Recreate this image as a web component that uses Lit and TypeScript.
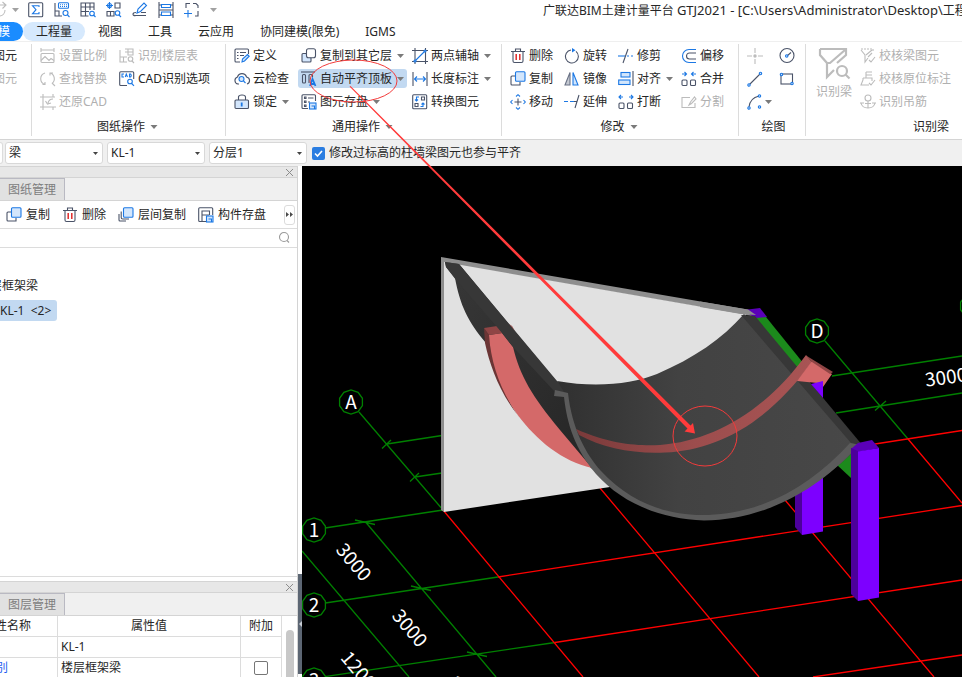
import { LitElement, html, svg, css, nothing, SVGTemplateResult } from "lit";
import { customElement, property } from "lit/decorators.js";
import { classMap } from "lit/directives/class-map.js";

const glyphs: Record<string, SVGTemplateResult> = {
  redo: svg`<path class="g" d="M14 8a6 6 0 0 1-5 6M4 7V5q0-2 3-2h8M11.500 0l3.500 3-3.500 3.500"/>`,
  sum: svg`<rect class="d" x=".7" y=".7" width="14" height="14" rx="1"/><path class="b" d="M11 5V3.700H4.500L8 7.700 4.500 11.800H11V10"/>`,
  gridTop: svg`<path class="d" d="M1 1v13h7M1 9h4v5"/><rect class="b" x="4.500" y=".700" width="10" height="5.600" rx="1"/><path class="b" stroke-dasharray="1 1" d="M6 2.700h8M6 4.500h8"/><circle class="b" cx="11.500" cy="11" r="2.500"/><path class="b" d="M13.500 13l2 2"/>`,
  table: svg`<path class="d" d="M8.500 14H1V1h13v7M1 5h13M1 9.500h8M5.500 1v13M10 1v7"/><circle class="b" cx="12" cy="11.500" r="2.300"/><path class="b" d="M13.500 13l2 2"/>`,
  blocks: svg`<path class="d" d="M9 1h5v5H9zM8 9.500H1V14h7zM4.500 9.500V14"/><circle class="b" cx="3.500" cy="3.500" r="2"/><path class="b" d="M3.500 0v7M0 3.500h7"/><circle class="b" cx="11.500" cy="11" r="2.300"/><path class="b" d="M13 13l2 2"/>`,
  pencil: svg`<path class="b" d="M5 11l1-4 6-6 2.500 2.500-6 6z"/><path class="d" d="M4 10.500q-3 0-3 1.700t3 1.300h10M9 10.500h5"/>`,
  ladder: svg`<path class="d" d="M1 0v16M15 0v16M1 3h2M13 3h2M1 8h14M1 13h2M13 13h2"/><path class="b" d="M3.500 2.500h9v3h-9zM3.500 10h9v3.500h-9z"/>`,
  expand: svg`<path class="d" d="M2 6V1.500h4M9 1.500h3l2 2V6M14 9v5h-3"/><path class="b" d="M4 8v7.500M0 11.500h8"/>`,
  scale: svg`<path class="g" d="M1 0v4M14 0v4M1 2h13"/><rect class="g" x="1" y="5.500" width="13" height="9" rx="1"/><path class="g" d="M1 12.500l4-4 4 4 2-2 3 2"/>`,
  floors: svg`<path class="g" d="M6 1h8v6H9V1M6 4h8M1 2v12h7M1 9h7M4.500 9v5"/><circle class="g" cx="11.500" cy="11" r="2.300"/><path class="g" d="M13 13l2 2"/>`,
  swap: svg`<path class="g" d="M5 13.500A6 6 0 0 1 5 2M10 2a6 6 0 0 1 2 10.500M2.500 13.500H5V11M13 2h-3v2.500M12 12l3 3"/>`,
  cad: svg`<path class="d" d="M8 14.500H1.700q-1 0-1-1V1.700q0-1 1-1h12q1 0 1 1V8"/><path class="b" d="M5 3H3v3h2M6.300 6l1-3 1.200 3M10.500 3v3h1q1.500-1.500 0-3z"/><circle class="b" cx="11" cy="10.500" r="2.300"/><path class="b" d="M12.700 12.500l2.300 2.300"/>`,
  restore: svg`<path class="g" d="M3 0v16M13 0v3M0 3h15M0 13h16M13 13v3M13 5q-4 0-5 4M5.500 7l2 3L11 9"/>`,
  define: svg`<path class="d" d="M14.500 6V2q0-1-1-1H2Q1 1 1 2v11q0 1 1 1h4M3 4.500h1.500M6 4.500h6M3 7.500h1.500M6 7.500h4M3 10.500h1.500"/><path class="bf" d="M8 14l.500-3 5-4.500 1.700 1.700L10.500 13z"/>`,
  cloud: svg`<path class="d" d="M5 13H4A3.600 3.600 0 0 1 3.500 6 4.700 4.700 0 0 1 12.500 6 3.600 3.600 0 0 1 13 13"/><circle class="bf" cx="7.500" cy="8" r="2.500"/><path class="b" d="M9.500 10l2 2"/>`,
  lock: svg`<path class="d" d="M4.500 6V3q0-2 3.500-2t3.500 2v3"/><rect class="df" x="1" y="6" width="13.500" height="8.500" rx="1"/><path class="b2" d="M7.700 8.500v4"/>`,
  copy: svg`<path class="d" d="M5 5H2Q1 5 1 6v7q0 1 1 1h8V11"/><rect class="bf" x="5.500" y=".700" width="9.500" height="9.500" rx="1"/>`,
  copyAlt: svg`<path class="df" d="M5 5.500H2q-1 0-1 1V13q0 1 1 1h7q1 0 1-1v-3z"/><rect class="d wf" x="5.500" y=".700" width="9" height="9" rx="2"/>`,
  copies: svg`<path class="d" d="M1 7v6q0 1 1 1h6M3.200 4.500v6q0 1.500 1.500 1.500H11"/><rect class="bf" x="5.500" y=".700" width="9.500" height="9.500" rx="1"/>`,
  flush: svg`<path class="d" d="M0 1h14"/><rect class="d" x="1.500" y="3.500" width="3" height="8.500" rx="1"/><path class="d" d="M8 12V4.500q0-1 1-1h1.500q1 0 1 1V6"/><path class="b2" d="M9 15l2.500-7 3 7M10 13h4"/>`,
  save: svg`<path class="d" d="M7 14.500H2q-1 0-1-1V1.700q0-1 1-1h11.500q1 0 1 1V7"/><path class="d" d="M3.500 3h1.500v1.500H3.500zM3.500 7h1.500v1.500H3.500zM3.500 11h1.500v1.500H3.500zM7 4h5.500M7 8h2"/><rect class="bf" x="8.500" y="9" width="6.500" height="6"/><path class="b" d="M10.500 12h3v3"/>`,
  axis: svg`<path class="d" d="M3 0v16M0 2.500h16M0 13.500h16M13.500 0v16"/><path class="b" d="M3 13L13 3"/><circle class="bf" cx="3" cy="13" r="1"/><circle class="bf" cx="13" cy="3" r="1"/>`,
  length: svg`<path class="d" d="M1 1v14M15 1v14"/><path class="b" d="M2.500 8h11M5 5.500L2.500 8 5 10.500M11 5.500L13.500 8 11 10.500"/>`,
  convert: svg`<rect class="d" x=".700" y=".700" width="14" height="14" rx="1"/><path class="d" d="M3 9.500h3v3H3zM9.500 3h3v3h-3z"/><path class="b" d="M7 3H4.500v4M3 5.500L4.500 7 6 5.500M8.500 12.500H11V9M9.500 10.500L11 9l1.500 1.500"/>`,
  trash: svg`<path class="d" d="M1 3.500h14M5.500 3V1h5v2M3 4v9q0 1.500 1.500 1.500h7Q13 14.500 13 13V4"/><path class="r" d="M6.200 6v6M9.800 6v6"/>`,
  rotate: svg`<path class="d" d="M7 2a6.500 6.500 0 1 0 5 1.400"/><path class="bs" d="M8 0l3.500 2.200L8 4.500z"/>`,
  trim: svg`<path class="b" d="M0 8h7"/><path class="b" stroke-dasharray="2 2" d="M9 8h7"/><path class="d" d="M10 1L5 15"/>`,
  offset: svg`<path class="b" d="M15 1.500H8a6.500 6.500 0 0 0 0 13h7"/><path class="d" d="M15 5H8.500a3 3 0 0 0 0 6H15"/>`,
  mirror: svg`<path class="dg" d="M6 1.500V14H1z"/><path class="bf" d="M9 1.500V14h5z"/>`,
  align: svg`<path class="d" d="M15 0v15"/><rect class="bf" x="3" y="1.500" width="9" height="4.500"/><rect class="bf" x=".700" y="9" width="11.300" height="4.500"/>`,
  merge: svg`<path class="b" d="M1 3h4M3.500 1L5.500 3 3.500 5M15 3h-4M12.500 1L10.500 3l2 2"/><rect class="d" x="1" y="9" width="5" height="5.500" rx="1"/><rect class="d" x="9.500" y="9" width="5" height="5.500" rx="1"/>`,
  move: svg`<path class="d" d="M8 4.500v7M4.500 8h7"/><path class="b" d="M6 2.500L8 .700l2 1.800M6 13.500l2 1.800 2-1.800M2.500 6L.700 8l1.800 2M13.500 6l1.800 2-1.800 2"/>`,
  extend: svg`<path class="b" stroke-dasharray="4 2" d="M0 7.500h10"/><path class="d" d="M15 1l-4 13M10 7.500h3"/>`,
  breakUp: svg`<path class="b" d="M1 3h4M3 1L1 3l2 2M15 3h-4M13 1l2 2-2 2"/><rect class="d" x="1" y="9" width="5" height="5.500" rx="1"/><rect class="d" x="9.500" y="9" width="5" height="5.500" rx="1"/>`,
  split: svg`<path class="g" d="M9 3.500H1v10h13V9M8 11l1.500-3 4-5L15 5l-4.500 4.500z"/>`,
  point: svg`<path class="g" d="M8 0v5M8 11v5M0 8h5M11 8h5"/><circle class="gfill" cx="8" cy="8" r="1.700"/>`,
  circle: svg`<circle class="d" cx="8" cy="7.500" r="7"/><path class="d" d="M8 8l4-3.500"/><circle class="bf" cx="7.700" cy="8" r="1.200"/>`,
  line: svg`<path class="d" d="M2.500 13.500l11-11"/><circle class="bf" cx="2" cy="14" r="1.200"/><circle class="bf" cx="13.500" cy="2.500" r="1.200"/>`,
  rect: svg`<rect class="d" x="2" y="3" width="11.500" height="10"/><circle class="bf" cx="2.500" cy="3.500" r="1.200"/><circle class="bf" cx="13" cy="12.500" r="1.200"/>`,
  arc: svg`<path class="d" d="M2 13Q3 4 12 2"/><circle class="bf" cx="2" cy="14" r="1.200"/><circle class="bf" cx="12.500" cy="2" r="1.200"/><circle class="bf" cx="12.500" cy="13" r="1.200"/>`,
  checkBeam: svg`<path class="g" stroke-dasharray="2 1" d="M1 1h12v3"/><path class="g" d="M1 2l4 5v7l3-4M6 7l6-5M8 9l4-4M9 12l2 2 4-5"/>`,
  checkTag: svg`<path class="g" d="M6 1v6M6 1h6M6 4h6M3 7h9v3M3 7v2l-2 5h8M9 12l2 2 4-5"/>`,
  anchor: svg`<circle class="g" cx="8" cy="4" r="3"/><path class="g" d="M8 7v7M1 9q1 5 7 5t7-5M0 9h4M12 9h4M5 9.500h6"/>`,
  panelSave: svg`<path class="d" d="M8 14.500H1.700q-1 0-1-1V1.700q0-1 1-1h12q1 0 1 1V8M4 14V4h7.500v4M4 8h7"/><rect class="bf" x="8.500" y="9" width="6.500" height="6"/><path class="b" d="M10.500 12h3v3"/>`,
  search: svg`<circle class="m" cx="8" cy="7" r="4.500"/><path class="m" d="M11 10.500l2 2"/>`,
};

const iconCss = css`
  .icon { width: 16px; height: 16px; flex: none; display: block; fill: none; stroke-width: 1.100; overflow: visible; }
  .icon .d { stroke: #4a5368; }
  .icon .b { stroke: #1c78e4; }
  .icon .b2 { stroke: #1c78e4; stroke-width: 1.800; }
  .icon .bs { fill: #1c78e4; }
  .icon .g { stroke: #bcbcbc; }
  .icon .m { stroke: #9a9a9a; }
  .icon .r { stroke: #e02a2a; stroke-width: 1.500; }
  .icon .wf { fill: #fff; }
  .icon .bf { stroke: #1c78e4; fill: #d3e6fc; }
  .icon .df { stroke: #4a5368; fill: #d3e6fc; }
  .icon .dg { stroke: #6a7285; fill: #c5c9d2; }
  .icon .gfill { fill: #bcbcbc; }
  .caret { width: 7px; height: 4px; flex: none; display: block; fill: #7a7a7a; }
`;

const icon = (name: string) =>
  html`<svg class="icon" viewBox="0 0 16 16" aria-hidden="true">${glyphs[name]}</svg>`;
const caret = () =>
  html`<svg class="caret" viewBox="0 0 7 4" aria-hidden="true"><path d="M0 0h7L3.500 4z" /></svg>`;

interface Tool {
  icon?: string;
  label?: string;
  name?: string;
  off?: boolean;
  menu?: boolean;
  on?: boolean;
}
interface Group {
  key: string;
  title: string;
  menu?: boolean;
  lead?: string;
  rows: Tool[][];
}

const groups: Group[] = [
  { key: "pick", title: "", rows: [[{ label: "图元" }], [{ label: "图元", off: true }]] },
  {
    key: "drawing", title: "图纸操作", menu: true,
    rows: [
      [{ icon: "scale", label: "设置比例", off: true }, { icon: "floors", label: "识别楼层表", off: true }],
      [{ icon: "swap", label: "查找替换", off: true }, { icon: "cad", label: "CAD识别选项" }],
      [{ icon: "restore", label: "还原CAD", off: true }, {}],
    ],
  },
  {
    key: "common", title: "通用操作", menu: true,
    rows: [
      [{ icon: "define", label: "定义" }, { icon: "copyAlt", label: "复制到其它层", menu: true }, { icon: "axis", label: "两点辅轴", menu: true }],
      [{ icon: "cloud", label: "云检查" }, { icon: "flush", label: "自动平齐顶板", menu: true, on: true }, { icon: "length", label: "长度标注", menu: true }],
      [{ icon: "lock", label: "锁定", menu: true }, { icon: "save", label: "图元存盘", menu: true }, { icon: "convert", label: "转换图元" }],
    ],
  },
  {
    key: "modify", title: "修改", menu: true,
    rows: [
      [{ icon: "trash", label: "删除" }, { icon: "rotate", label: "旋转" }, { icon: "trim", label: "修剪" }, { icon: "offset", label: "偏移" }],
      [{ icon: "copy", label: "复制" }, { icon: "mirror", label: "镜像" }, { icon: "align", label: "对齐", menu: true }, { icon: "merge", label: "合并" }],
      [{ icon: "move", label: "移动" }, { icon: "extend", label: "延伸" }, { icon: "breakUp", label: "打断" }, { icon: "split", label: "分割", off: true }],
    ],
  },
  {
    key: "draw", title: "绘图",
    rows: [
      [{ icon: "point", name: "点", off: true }, { icon: "circle", name: "圆" }],
      [{ icon: "line", name: "直线" }, { icon: "rect", name: "矩形" }],
      [{ icon: "arc", name: "弧", menu: true }, {}],
    ],
  },
  {
    key: "beam", title: "识别梁", lead: "识别梁",
    rows: [
      [{ icon: "checkBeam", label: "校核梁图元", off: true }],
      [{ icon: "checkTag", label: "校核原位标注", off: true }],
      [{ icon: "anchor", label: "识别吊筋", off: true }],
    ],
  },
];

@customElement("ribbon-bar")
export class RibbonBar extends LitElement {
  static styles = [
    iconCss,
    css`
      :host { display: flex; box-sizing: border-box; height: 99px; padding-top: 2px; border-top: 1px solid #efefef; border-bottom: 1px solid #d4d4d4; background: #fff; overflow: hidden; }
      .group { flex: none; display: flex; flex-direction: column; box-sizing: border-box; height: 92px; padding: 0 0 0 5px; border-right: 1px solid #dcdcdc; }
      .body { display: flex; flex: none; height: 70px; }
      .tools { display: grid; grid-auto-rows: 23px; column-gap: 2px; align-content: start; }
      .pick { width: 32px; }
      .pick .tools { margin-left: -15px; }
      .drawing { width: 194px; }
      .drawing .tools { grid-template-columns: 77px 100px; }
      .common { width: 276px; }
      .common .tools { grid-template-columns: 65px 109px 85px; }
      .modify { width: 237px; }
      .modify .tools { grid-template-columns: 52px 52px 61px 50px; }
      .draw { width: 67px; }
      .draw .tools { grid-template-columns: 30px 22px; }
      .beam { width: 252px; border-right: 0; }
      .tool { display: flex; align-items: center; gap: 3px; height: 19px; margin: 2px 0; padding: 0 3px; border: 0; border-radius: 3px; background: none; color: #262626; font: inherit; white-space: nowrap; }
      .tool .caret { margin-left: 2px; }
      .draw .tool { gap: 0; }
      .draw .title { padding-right: 2px; }
      .tool.off { color: #b0b0b0; }
      .tool.on { background: #c2d9f1; }
      .title { display: flex; flex: none; align-items: center; justify-content: center; gap: 5px; height: 25px; padding-right: 7px; color: #262626; line-height: 18px; }
      .title .caret { width: 8px; }
      .lead { display: flex; flex-direction: column; align-items: center; gap: 3px; width: 46px; padding: 2px 0 0; border: 0; background: none; color: #b0b0b0; font: inherit; line-height: 18px; white-space: nowrap; }
      .funnel { width: 34px; height: 34px; fill: none; stroke: #bcbcbc; stroke-width: 2.200; }
    `,
  ];

  private tool(t: Tool) {
    if (!t.icon && !t.label) return html`<span></span>`;
    return html`<button class=${classMap({ tool: true, off: !!t.off, on: !!t.on })} ?disabled=${!!t.off} aria-label=${t.name ?? t.label ?? ""}>
      ${t.icon ? icon(t.icon) : nothing}${t.label ? html`<span>${t.label}</span>` : nothing}${t.menu ? caret() : nothing}
    </button>`;
  }

  render() {
    return groups.map(
      (g) => html`<section class="group ${g.key}">
        <div class="body">
          ${g.lead
            ? html`<button class="lead" disabled>
                <svg class="funnel" viewBox="0 0 34 34" aria-hidden="true">
                  <path d="M3 3h26v6L20 17M3 3v6l7 8v14l7-7M10 17h3L28 4" />
                  <circle cx="25" cy="25" r="5" /><path d="M28.500 28.500l4 4" />
                </svg>
                <span>${g.lead}</span>
              </button>`
            : nothing}
          <div class="tools">${g.rows.flat().map((t) => this.tool(t))}</div>
        </div>
        <div class="title">${g.title}${g.menu ? caret() : nothing}</div>
      </section>`
    );
  }
}

@customElement("dock-header")
export class DockHeader extends LitElement {
  @property() label = "";
  static styles = css`
    :host { display: block; flex: none; background: #f0f0f0; border-top: 1px solid #d4d4d4; border-bottom: 1px solid #d4d4d4; }
    .bar { display: flex; justify-content: flex-end; align-items: center; height: 10px; padding-right: 3px; background: #e7e7e7; border-bottom: 1px solid #d4d4d4; }
    .close { display: flex; padding: 0; border: 0; background: none; }
    .close svg { width: 9px; height: 9px; stroke: #8c8c8c; fill: none; }
    .tab { display: block; box-sizing: border-box; height: 22px; width: 65px; padding: 0 0 0 8px; border: 1px solid #b9b9c2; border-width: 1px 1px 0 0; background: #e1e1e1; color: #7d7d7d; font: inherit; line-height: 20px; text-align: left; white-space: nowrap; }
  `;
  render() {
    return html`<div class="bar">
        <button class="close" aria-label="关闭"><svg viewBox="0 0 9 9"><path d="M1 1l7 7M8 1L1 8" /></svg></button>
      </div>
      <button class="tab">${this.label}</button>`;
  }
}

@customElement("side-dock")
export class SideDock extends LitElement {
  static styles = [
    iconCss,
    css`
      :host { display: flex; flex-direction: column; box-sizing: border-box; width: 298px; flex: none; min-height: 0; background: #fff; border-right: 1px solid #d4d4d4; overflow: hidden; color: #262626; }
      .tools { display: flex; align-items: center; height: 27px; flex: none; padding: 0 2px 0 6px; gap: 12px; border-bottom: 1px solid #dcdcdc; }
      .tool { display: flex; align-items: center; gap: 4px; padding: 0; border: 0; background: none; color: inherit; font: inherit; white-space: nowrap; }
      .more { display: flex; align-items: center; justify-content: center; width: 11px; height: 20px; margin-left: auto; padding: 0; border: 1px solid #dcdcdc; border-radius: 3px; background: #fff; }
      .more svg { width: 7px; height: 5px; flex: none; fill: #4a4a4a; }
      .search { display: flex; align-items: center; height: 18px; flex: none; padding-right: 5px; border-bottom: 1px solid #dcdcdc; }
      .search input { flex: 1; min-width: 0; height: 16px; padding: 0; border: 0; outline: 0; font: inherit; }
      .tree { flex: 1; min-height: 0; margin: 0; padding: 26px 0 0; list-style: none; overflow: hidden; white-space: nowrap; border-bottom: 1px solid #dcdcdc; }
      .tree li { display: flex; align-items: center; height: 24px; }
      .tree .type { margin-left: -22px; }
      .tree .chosen { display: block; height: 21px; line-height: 21px; width: 57px; border-radius: 0 3px 3px 0; background: #c2d9f1; white-space: pre; }
      .props { flex: none; height: 96px; display: flex; flex-direction: column; margin-top: 4px; }
      .sheet { display: flex; flex: 1; min-height: 0; overflow: hidden; }
      table { flex: none; width: 325px; margin-left: -43px; border-collapse: separate; border-spacing: 0; table-layout: fixed; }
      th, td { box-sizing: border-box; height: 21px; padding: 0 2px; border-right: 1px solid #dcdcdc; border-bottom: 1px solid #dcdcdc; font-weight: 400; line-height: 18px; text-align: left; white-space: nowrap; }
      th { text-align: center; }
      .name { width: 101px; }
      .extra { width: 41px; }
      .val { padding-left: 3px; }
      .link { color: #1c5cf0; padding-left: 3px; }
      .mid { text-align: center; }
      .mid input { appearance: none; display: block; box-sizing: border-box; width: 14px; height: 14px; margin: 0 auto; border: 1px solid #767676; border-radius: 2px; background: #fff; }
      .track { flex: 1; padding: 14px 3px 0 4px; }
      .thumb { height: 60px; border-radius: 4px; background: #c8c8c8; }
    `,
  ];
  render() {
    const tools = [["copy", "复制"], ["trash", "删除"], ["copies", "层间复制"], ["panelSave", "构件存盘"]];
    return html`
      <dock-header label="图纸管理"></dock-header>
      <div class="tools">
        ${tools.map(([i, t]) => html`<button class="tool">${icon(i)}<span>${t}</span></button>`)}
        <button class="more" aria-label="更多"><svg viewBox="0 0 7 5"><path d="M0 0l3 2.500L0 5zM4 0l3 2.500L4 5z" /></svg></button>
      </div>
      <div class="search"><input type="text" aria-label="搜索构件" />${icon("search")}</div>
      <ul class="tree">
        <li><span class="type">楼层框架梁</span></li>
        <li><span class="chosen">KL-1  &lt;2&gt;</span></li>
      </ul>
      <div class="props">
        <dock-header label="图层管理"></dock-header>
        <div class="sheet">
          <table>
            <thead><tr><th class="name">属性名称</th><th>属性值</th><th class="extra">附加</th></tr></thead>
            <tbody>
              <tr><td></td><td class="val">KL-1</td><td></td></tr>
              <tr><td class="link">结构类别</td><td class="val">楼层框架梁</td><td class="mid"><input type="checkbox" aria-label="附加结构类别" /></td></tr>
            </tbody>
          </table>
          <div class="track"><div class="thumb"></div></div>
        </div>
      </div>`;
  }
}

const bubble = (x: number, y: number, label: string) => {
  const pts = Array.from({ length: 10 }, (_, i) => {
    const a = (i * Math.PI) / 5 + Math.PI / 10;
    return `${(x + 12 * Math.cos(a)).toFixed(1)},${(y + 12 * Math.sin(a)).toFixed(1)}`;
  }).join(" ");
  return svg`<polygon class="bubble" points=${pts} /><text class="label" x=${x} y=${y + 7}>${label}</text>`;
};

@customElement("model-view")
export class ModelView extends LitElement {
  static styles = css`
    :host { display: block; flex: 1; min-width: 0; min-height: 0; background: #000; overflow: hidden; }
    svg { display: block; width: 100%; height: 100%; }
    .axis { fill: none; stroke: #008000; stroke-width: 1.300; }
    .bubble { fill: #000; stroke: #008000; stroke-width: 1.300; }
    .grid { fill: none; stroke: #f00; stroke-width: 1.300; }
    .label { fill: #fff; font: 19px "Noto Sans CJK SC", sans-serif; text-anchor: middle; }
    .white { fill: #e1e1e1; }
    .rim { fill: #8e8e8e; }
    .edge { fill: #373737; }
    .lip { fill: #5b5b5b; }
    .coral { fill: #d46969; }
    .coralDim { fill: #8f4545; }
    .coralDeep { fill: #6b3535; }
    .green { fill: #1c8a1c; }
    .violet { fill: #7d00ff; }
    .violetTop { fill: #5a00b8; }
    .violetSide { fill: #4c009b; }
  `;
  render() {
    return html`<svg viewBox="302 166 660 511" preserveAspectRatio="xMinYMin slice" role="img" aria-label="三维视图">
      <defs>
        <linearGradient id="bowl" x1="0" y1="0" x2="1" y2="0">
          <stop offset="0" stop-color="#303030" /><stop offset=".4" stop-color="#424242" /><stop offset="1" stop-color="#484848" />
        </linearGradient>
        <linearGradient id="under" x1="0" y1="0" x2="1" y2="1">
          <stop offset="0" stop-color="#383838" /><stop offset="1" stop-color="#242424" />
        </linearGradient>
        <linearGradient id="band" x1="0" y1="0" x2="1" y2="0">
          <stop offset="0" stop-color="#7a3a3a" /><stop offset=".5" stop-color="#9c4d4d" /><stop offset="1" stop-color="#a85454" />
        </linearGradient>
      </defs>
      <path class="axis" d="M359 412L443 510M387 444L442 435.500M382 448.500L391 440M415 477L442 473M410 481.500L419 473M302 531.500L443 510M355 520L375 524.500M366 522.500L496 677M302 606.500L498 577M411 586L431 590.500M302 680L555 642.500M467 652L487 656.500M302 551L409 677" />
      <path class="axis" d="M825 341L908 439M832 376L962 356M836 413L962 393M875 410.500L886 401" />
      <path class="grid" d="M443 510L583 677M498 577L962 505.500M555 642.500L962 580M813 677L962 655M600 488L759 677M785 500L934 677M908 439L962 503M875 444L962 430.500" />
      ${bubble(351, 402, "A")}${bubble(314, 530, "1")}${bubble(314, 605, "2")}${bubble(314, 680, "3")}${bubble(817, 331, "D")}${bubble(972, 306, "")}
      <text class="label" transform="translate(354 562) rotate(50)" y="7">3000</text>
      <text class="label" transform="translate(410 628) rotate(50)" y="7">3000</text>
      <text class="label" transform="translate(466 695) rotate(50)" y="7">3000</text>
      <text class="label" transform="translate(362 674) rotate(50)" y="7">12000</text>
      <text class="label" transform="translate(946 377) rotate(-8)" y="7">3000</text>

      <polygon class="rim" points="441,257 756,311 752,316 444,263 444,512 441,510" />
      <polygon class="white" points="444,262 746,314.500 690,420 610,487 444,512" />
      <polygon class="violetTop" points="744,310 760,308 767,317 757,320" />
      <polygon class="rim" points="700,301.500 748,309.500 756,315 741,314 700,307" />
      <polygon class="green" points="756,318 766,317 804,364 796,374" />
      <polygon class="violet" points="802,485 823,470 823,531.500 802,535" />
      <polygon class="violetSide" points="795,490 802,485 802,535 795,527" />
      <polygon class="green" points="836,464 856,446 851,478" />

      <path fill="url(#under)" d="M455 278C460 305 468 322 486 343L500 343C508 380 535 420 591 468L606 478L570 395L556 381L459 264L445 262L446 267Z" />
      <path class="coralDeep" d="M484 328L489 335C495 378 512 408 520 418C500 394 490 366 485 343Z" />
      <path class="coral" d="M489 335L502 333L513 347C520 376 532 396 560 430L592 468C562 461 537 441 517 414C501 391 491 364 489 335Z" />
      <polygon class="coralDim" points="484,328 497,326 503,333 489,335" />
      <path class="edge" d="M445 262L459 264L557 381L568 394L555 392L513 347L502 333L497 327L456 280L446 267Z" />
      <polygon class="coralDim" points="509,324 512,326 515,331" />

      <path fill="url(#bowl)" d="M557 381C596 388 632 384 657 374C694 358 722 339 744 314L860 445C812 495 757 518 702 518C662 517 626 502 598 473C582 455 569 430 566 395Z" />
      <polygon class="edge" points="741,315 755,316 863,446 851,443" />
      <path fill="url(#band)" d="M576 429C612 445 640 446 660 445C714 441 766 410 806 355L812 362C767 424 717 450 665 452.500C633 454 603 448 579 435Z" />
      <path class="coral" d="M812 361L832 374L823 387L817 383L797 381Z" />
      <polygon class="coralDim" points="806,355.500 833,372 830,374 812,362" />
      <polygon class="violet" points="811,384 823,381 823,398" />
      <path class="lip" d="M555 390L568 393C572 429 586 454 601 471C630 502 665 515 702 515C761 515 811 486 850 443L863 445.500L857 447C815 493 761 520 704 520.500C660 519 622 503 596 474C575 449 567 424 564 397L554 396Z" />
      <polygon class="violetTop" points="858,443 872,440 879,448 858,452 851,449" />
      <polygon class="violetSide" points="851,448 858,451 858,601 851,594" />
      <polygon class="violet" points="858,451.500 879,448 879,597.500 858,601" />
    </svg>`;
  }
}

@customElement("app-root")
export class AppRoot extends LitElement {
  static styles = [
    iconCss,
    css`
      :host { position: relative; display: flex; flex-direction: column; height: 100vh; overflow: hidden; background: #fff; color: #262626; font: 12px/18px "Noto Sans", "Noto Sans CJK SC", sans-serif; }
      .titlebar { display: grid; grid-template-columns: 543px 1fr; align-items: center; height: 21px; flex: none; overflow: hidden; white-space: nowrap; }
      .quick { display: flex; align-items: center; gap: 10px; margin-left: -9px; padding-bottom: 2px; }
      .quick button { display: flex; padding: 0; border: 0; background: none; }
      .quick .redo { gap: 5px; align-items: center; margin-right: -1px; }
      .quick .caret { opacity: .7; }
      .title { overflow: hidden; }
      .path { font-size: 13px; }
      .tabs { display: flex; height: 20px; flex: none; margin-left: -27px; overflow: hidden; }
      .tab { height: 19px; margin-top: 1px; padding: 0 13px; border: 0; border-radius: 10px; background: none; color: inherit; font: inherit; line-height: 19px; white-space: nowrap; }
      .tab.hot { background: #d6e9fd; }
      .tab.current { background: #1a8cff; color: #fff; }
      .options { display: flex; align-items: center; gap: 4px; height: 26px; flex: none; background: #f0f0f0; }
      .stub { width: 2px; height: 20px; flex: none; margin-right: -2px; box-sizing: content-box; border: 1px solid #dcdcdc; border-left: 0; border-radius: 0 3px 3px 0; background: #fff; }
      .pick { position: relative; display: flex; align-items: center; width: 98px; flex: none; }
      .pick select { appearance: none; box-sizing: border-box; width: 100%; height: 22px; padding: 0 16px 0 3px; border: 1px solid #d8d8d8; border-radius: 3px; background: #fff; color: inherit; font: inherit; }
      .pick .caret { position: absolute; right: 5px; width: 5px; height: 3px; fill: #444; }
      .sync { display: flex; align-items: center; gap: 4px; margin-left: 1px; white-space: nowrap; }
      .sync input { appearance: none; width: 13px; height: 13px; margin: 0; border-radius: 2px; background: #2a7de1; }
      .box { position: relative; display: flex; }
      .box svg { position: absolute; inset: 0; width: 13px; height: 13px; fill: none; stroke: #fff; stroke-width: 1.600; pointer-events: none; }
      .main { display: flex; flex: 1; min-height: 0; }
      .splitter { display: flex; flex-direction: column; justify-content: flex-end; width: 4px; flex: none; padding-bottom: 3px; box-sizing: border-box; background: #fff; }
      .grip { display: flex; align-items: center; justify-content: flex-end; height: 100px; background: #5c6673; }
      .grip svg { width: 3px; height: 6px; fill: #c9ced6; }
      .markup { position: absolute; inset: 0; width: 100%; height: 100%; pointer-events: none; fill: none; stroke: #f33b3b; }
      .markup .solid { fill: #ff3b3b; stroke: none; }
    `,
  ];
  render() {
    const quick = ["sum", "gridTop", "table", "blocks", "pencil", "ladder", "expand"];
    const tabs = ["建模", "工程量", "视图", "工具", "云应用", "协同建模(限免)", "IGMS"];
    const picks = [["构件类型", "梁"], ["构件", "KL-1"], ["分层", "分层1"]];
    return html`
      <header class="titlebar">
        <div class="quick">
          <button class="redo" aria-label="重做">${icon("redo")}${caret()}</button>
          ${quick.map((q) => html`<button aria-label=${q}>${icon(q)}</button>`)}
          <button aria-label="自定义">${caret()}</button>
        </div>
        <div class="title">广联达BIM土建计量平台 <span class="path">GTJ2021 - [C:\\Users\\Administrator\\Desktop\\</span>工程</div>
      </header>
      <nav class="tabs">
        ${tabs.map((t, i) => html`<button class=${classMap({ tab: true, current: i === 0, hot: i === 1 })}>${t}</button>`)}
      </nav>
      <ribbon-bar></ribbon-bar>
      <div class="options">
        <span class="stub"></span>
        ${picks.map(([n, v]) => html`<div class="pick"><select aria-label=${n}><option>${v}</option></select>${caret()}</div>`)}
        <label class="sync">
          <span class="box"><input type="checkbox" checked /><svg viewBox="0 0 13 13"><path d="M3 6.500L5.500 9 10 4" /></svg></span>
          修改过标高的柱墙梁图元也参与平齐
        </label>
      </div>
      <div class="main">
        <side-dock></side-dock>
        <div class="splitter"><div class="grip"><svg viewBox="0 0 3 6"><path d="M3 0v6L0 3z" /></svg></div></div>
        <model-view></model-view>
      </div>
      <svg class="markup" viewBox="0 0 962 677" preserveAspectRatio="xMinYMin slice" aria-hidden="true">
        <ellipse cx="353.500" cy="81" rx="43.500" ry="21" />
        <ellipse cx="705" cy="436" rx="32" ry="30" />
        <path class="solid" d="M349.500 86.500L350.500 86L690.500 425.500L693 423L695 433.500L684.500 431.500L687.500 428.500Z" />
      </svg>`;
  }
}
